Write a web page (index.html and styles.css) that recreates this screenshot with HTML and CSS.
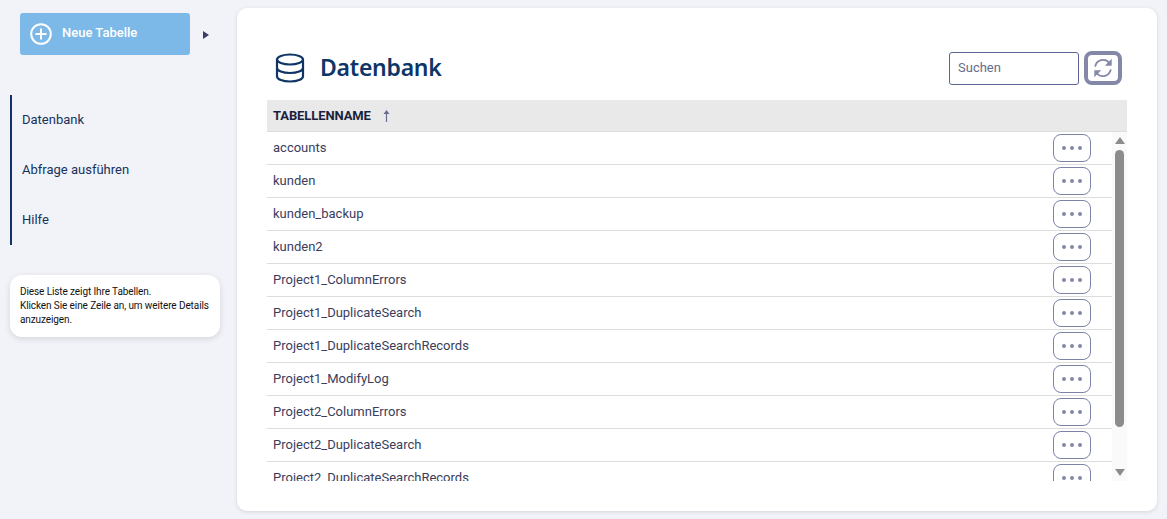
FILE: index.html
```html
<!DOCTYPE html>
<html lang="de">
<head>
<meta charset="utf-8">
<title>Datenbank</title>
<link rel="stylesheet" href="styles.css">
</head>
<body>
<div class="app">
  <aside class="sidebar">
    <div class="new-row">
      <button class="new-btn">
        <svg class="plus" viewBox="0 0 22 22" width="22" height="22"><circle cx="11" cy="11" r="9.800" fill="none" stroke="#fff" stroke-width="2"/><path d="M11 5.500v11M5.500 11h11" stroke="#fff" stroke-width="2" fill="none"/></svg>
        <span>Neue Tabelle</span>
      </button>
      <span class="caret"></span>
    </div>
    <nav class="nav">
      <a>Datenbank</a>
      <a>Abfrage ausführen</a>
      <a>Hilfe</a>
    </nav>
    <div class="hint">Diese Liste zeigt Ihre Tabellen.<br>Klicken Sie eine Zeile an, um weitere Details anzuzeigen.</div>
  </aside>
  <main class="card">
    <header class="head">
      <div class="title">
        <svg viewBox="0 0 30 30" width="30" height="30" fill="none" stroke="#0e3566" stroke-width="2.200"><ellipse cx="15" cy="6.500" rx="13" ry="5"/><path d="M2 6.500v17c0 2.800 5.800 5 13 5s13-2.200 13-5v-17"/><path d="M2 15c0 2.800 5.800 5 13 5s13-2.200 13-5"/></svg>
        <h1>Datenbank</h1>
      </div>
      <div class="tools">
        <input class="search" placeholder="Suchen">
        <button class="refresh">
          <svg viewBox="0 0 24 24" width="22" height="22" fill="none" stroke="#8388a9" stroke-width="2"><path d="M3.500 10.500A8.800 8.800 0 0 1 19 6.500"/><path d="M20.500 13.500A8.800 8.800 0 0 1 5 17.500"/><path d="M21.500 2v7.500H14z" fill="#8388a9" stroke="none"/><path d="M2.500 22v-7.500H10z" fill="#8388a9" stroke="none"/></svg>
        </button>
      </div>
    </header>
    <div class="thead"><span>TABELLENNAME</span>
      <svg viewBox="0 0 7 12" width="7" height="12"><path d="M3.500 2v10" stroke="#6a6d92" stroke-width="1.200"/><path d="M3.500 0L6.500 4h-6z" fill="#6a6d92"/></svg>
    </div>
    <div class="tbody">
      <div class="rows">
        <div class="row"><span>accounts</span><button class="more"><i></i><i></i><i></i></button></div>
        <div class="row"><span>kunden</span><button class="more"><i></i><i></i><i></i></button></div>
        <div class="row"><span>kunden_backup</span><button class="more"><i></i><i></i><i></i></button></div>
        <div class="row"><span>kunden2</span><button class="more"><i></i><i></i><i></i></button></div>
        <div class="row"><span>Project1_ColumnErrors</span><button class="more"><i></i><i></i><i></i></button></div>
        <div class="row"><span>Project1_DuplicateSearch</span><button class="more"><i></i><i></i><i></i></button></div>
        <div class="row"><span>Project1_DuplicateSearchRecords</span><button class="more"><i></i><i></i><i></i></button></div>
        <div class="row"><span>Project1_ModifyLog</span><button class="more"><i></i><i></i><i></i></button></div>
        <div class="row"><span>Project2_ColumnErrors</span><button class="more"><i></i><i></i><i></i></button></div>
        <div class="row"><span>Project2_DuplicateSearch</span><button class="more"><i></i><i></i><i></i></button></div>
        <div class="row"><span>Project2_DuplicateSearchRecords</span><button class="more"><i></i><i></i><i></i></button></div>
      </div>
      <div class="scrollbar">
        <span class="arrow up"></span>
        <span class="thumb"></span>
        <span class="arrow down"></span>
      </div>
    </div>
  </main>
</div>
</body>
</html>
```
FILE: styles.css
```css
* { box-sizing: border-box; }
html, body { margin: 0; height: 100%; }
body { background: #f2f3f8; font-family: Roboto, "Liberation Sans", sans-serif; overflow: hidden; }
.app { display: flex; height: 519px; }
.sidebar { width: 237px; flex: none; padding: 13px 0 0 10px; }
.new-row { display: flex; align-items: center; padding-left: 10px; }
.new-btn { width: 170px; height: 42px; border: 0; border-radius: 3px; background: #7cb9e8; color: #fff; font: 500 13px Roboto, sans-serif; display: flex; align-items: center; gap: 10px; padding: 0 0 2px 10px; }
.new-btn span { margin-bottom: 2px; }
.plus { flex: none; margin-top: 2px; }
.caret { margin-left: 13px; margin-top: 2px; width: 0; height: 0; border-left: 6px solid #3b3c68; border-top: 4px solid transparent; border-bottom: 4px solid transparent; }
.nav { margin-top: 40px; width: 210px; height: 150px; border-left: 2px solid #0e3566; display: flex; flex-direction: column; }
.nav a { height: 50px; display: flex; align-items: center; padding: 0 0 2px 10px; color: #16325c; font-size: 13px; }
.hint { margin-top: 30px; width: 210px; height: 62px; padding: 10px 0 10px 10px; background: #fff; border-radius: 12px; box-shadow: 0 2px 6px rgba(0,0,0,.12); font-size: 10px; line-height: 14px; letter-spacing: -.1px; color: #111; }
.card { width: 920px; height: 503px; margin-top: 8px; background: #fff; border-radius: 10px; box-shadow: 0 1px 4px rgba(0,0,0,.12); padding: 28px 30px 0; display: flex; flex-direction: column; }
.head { display: flex; justify-content: space-between; align-items: center; height: 64px; padding-left: 8px; padding-right: 5px; }
.title { display: flex; align-items: center; gap: 15px; }
.title h1 { margin: 0 0 2px; font: 600 23px "Noto Sans", sans-serif; letter-spacing: -.25px; color: #0e3566; }
.tools { display: flex; align-items: center; gap: 5px; }
.search { width: 130px; height: 33px; border: 1px solid #5c6592; border-radius: 3px; padding: 0 8px 2px; font: 13px Roboto, sans-serif; outline: 0; }
.search::placeholder { color: #666c8c; opacity: 1; }
.refresh { width: 38px; height: 34px; border: 4px solid #8388a9; border-radius: 8px; background: #fff; padding: 0; display: flex; align-items: center; justify-content: center; }
.thead { height: 32px; background: #e9e9e9; border-bottom: 1px solid #ddd; display: flex; align-items: center; gap: 12px; padding-left: 6px; font-size: 13px; font-weight: 700; letter-spacing: -.1px; color: #1a1f3d; }
.tbody { display: flex; height: 349px; }
.rows { width: 845px; overflow: hidden; }
.row { height: 33px; border-bottom: 1px solid #ddd; display: flex; align-items: center; justify-content: space-between; padding: 0 21px 0 6px; font-size: 13px; color: #3a3d5c; }
.row span { margin-top: -2px; }
.more { width: 38px; height: 28px; flex: none; border: 1px solid #7c82a6; border-radius: 8px; background: #fff; padding: 0; display: flex; align-items: center; justify-content: center; gap: 4px; }
.more i { width: 4px; height: 4px; border-radius: 50%; background: #8388a9; }
.scrollbar { width: 15px; background: #fafafa; display: flex; flex-direction: column; align-items: center; }
.arrow { width: 0; height: 0; border-left: 5px solid transparent; border-right: 5px solid transparent; }
.arrow.up { margin-top: 5px; border-bottom: 7px solid #8c8c8c; }
.arrow.down { margin-top: 42px; border-top: 7px solid #8c8c8c; }
.thumb { width: 9px; height: 277px; margin-top: 6px; background: #8c8c8c; border-radius: 5px; }
```
